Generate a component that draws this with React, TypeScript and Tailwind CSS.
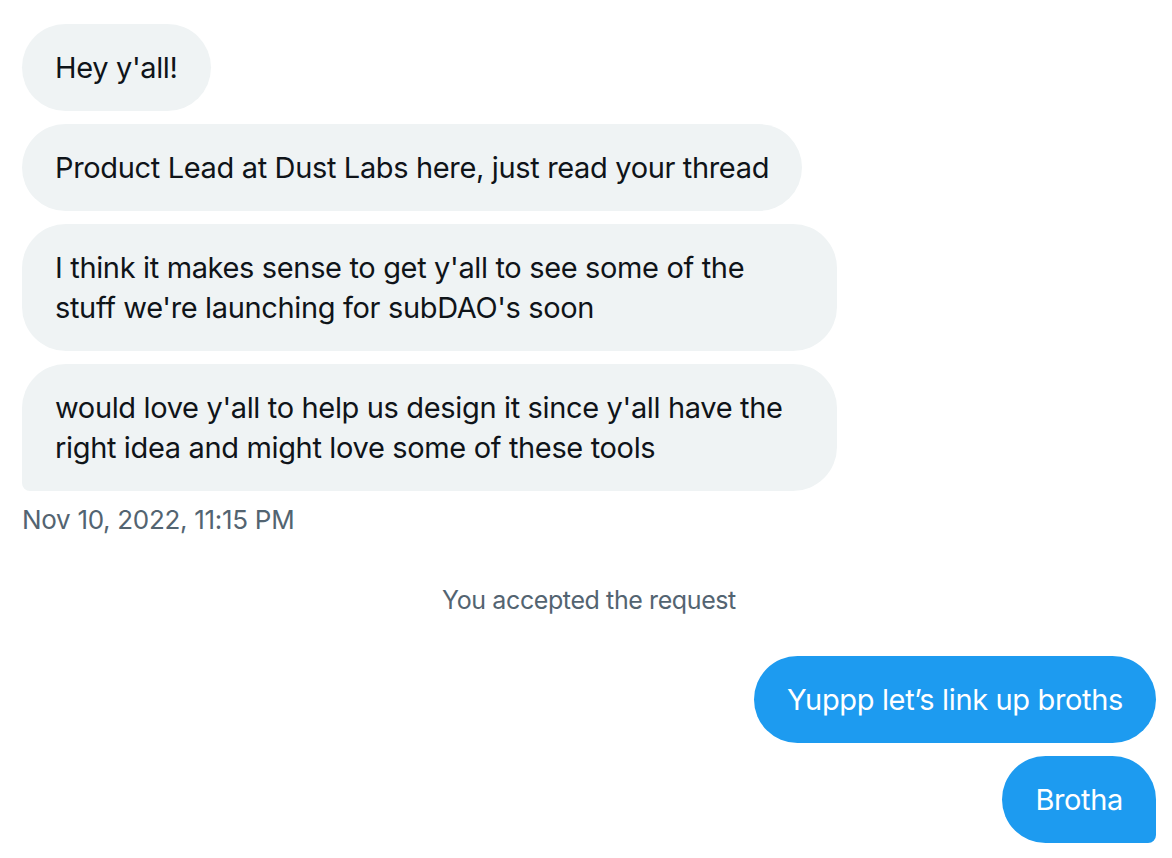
const received = [
  { id: 1, lines: ["Hey y'all!"], wide: false },
  { id: 2, lines: ["Product Lead at Dust Labs here, just read your thread"], wide: false },
  { id: 3, lines: ["I think it makes sense to get y'all to see some of the", "stuff we're launching for subDAO's soon"], wide: true },
  { id: 4, lines: ["would love y'all to help us design it since y'all have the", "right idea and might love some of these tools"], wide: true },
];

const sent = ["Yuppp let\u2019s link up broths", "Brotha"];

const font = { fontFamily: "Inter, 'Liberation Sans', sans-serif" };

const App = () => {
  return (
    <div className="min-h-[858px] w-[1172px] bg-white pt-[24px] pl-[22px] pr-[16px]" style={font}>
      {/* Incoming group */}
      <div className="flex flex-col items-start gap-[13px]">
        {received.map((m, i) => (
          <div
            key={m.id}
            className={`bg-[#eff3f4] text-[#0f1419] text-[29px] tracking-[-0.35px] leading-[40px] px-[33px] py-[23.5px] rounded-[44px] ${
              m.wide ? "w-[815px]" : ""
            } ${i === received.length - 1 ? "rounded-bl-[8px]" : ""}`}
          >
            {m.lines.map((l, j) => (
              <div key={j} className="whitespace-nowrap">{l}</div>
            ))}
          </div>
        ))}
      </div>
      <div className="mt-[13px] text-[26px] tracking-[-0.3px] leading-[32px] text-[#536471]">Nov 10, 2022, 11:15 PM</div>

      <div className="mt-[48px] text-center text-[25px] tracking-[-0.4px] leading-[32px] text-[#536471]">You accepted the request</div>

      {/* Outgoing group */}
      <div className="mt-[40px] flex flex-col items-end gap-[13px]">
        {sent.map((s, i) => (
          <div
            key={s}
            className={`bg-[#1d9bf0] text-white text-[29px] tracking-[-0.35px] leading-[40px] px-[33px] py-[23.5px] rounded-[44px] whitespace-nowrap ${
              i === sent.length - 1 ? "rounded-br-[8px]" : ""
            }`}
          >
            {s}
          </div>
        ))}
      </div>
    </div>
  );
};

export default App;
